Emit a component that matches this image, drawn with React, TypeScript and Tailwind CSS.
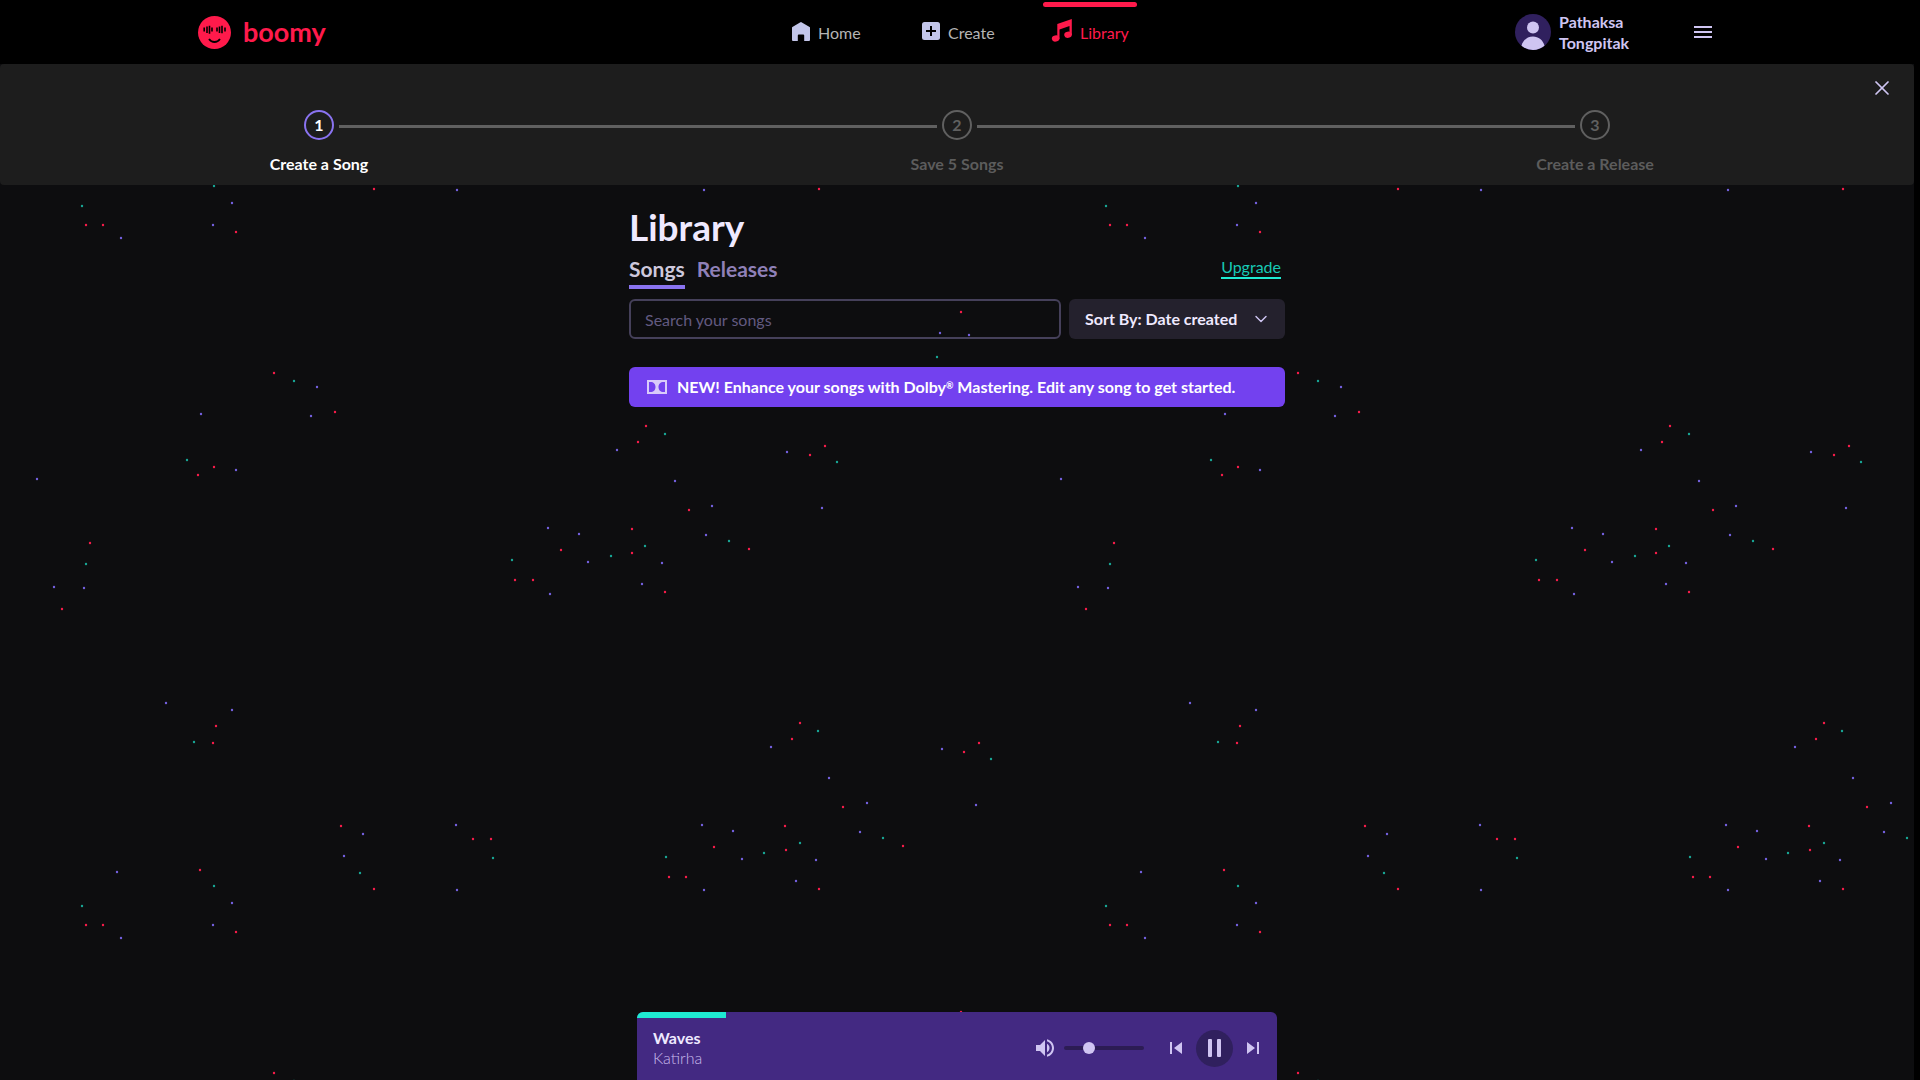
import React, { useState } from 'react';
import { ChevronDown, X } from 'lucide-react';

const PURPLE = '#7460e0';
const RED = '#f81b4a';
const TEAL = '#17a696';

// One tile of confetti, repeated over the page
const TILE_WIDTH = 1024;
const TILE_HEIGHT = 700;

const confetti: { color: string; points: number[][] }[] = [
  {
    color: PURPLE,
    points: [
      [457, 190], [232, 203], [213, 225], [121, 238], [317, 387], [311, 416], [201, 414], [236, 470],
      [37, 479], [54, 587], [84, 588], [617, 450], [787, 452], [675, 481], [822, 508], [712, 506],
      [706, 535], [548, 528], [579, 534], [588, 562], [662, 563], [642, 584], [550, 594], [166, 3],
      [232, 10], [363, 134], [344, 156], [456, 125], [117, 172], [771, 47], [942, 49], [829, 78],
      [867, 103], [976, 105], [702, 125], [733, 131], [860, 132], [742, 159], [816, 160], [704, 190],
      [796, 181], [940, 333], [969, 335]
    ]
  },
  {
    color: RED,
    points: [
      [374, 189], [86, 225], [103, 225], [236, 232], [274, 373], [335, 412], [198, 475], [214, 467],
      [90, 543], [62, 609], [646, 426], [638, 442], [825, 446], [810, 455], [689, 510], [632, 529],
      [749, 549], [632, 553], [561, 550], [515, 580], [533, 580], [665, 592], [216, 26], [213, 43],
      [341, 126], [473, 139], [491, 139], [200, 170], [800, 23], [792, 39], [964, 52], [979, 43],
      [843, 107], [785, 126], [786, 150], [714, 147], [903, 146], [669, 177], [686, 177], [819, 189],
      [961, 312]
    ]
  },
  {
    color: TEAL,
    points: [
      [214, 186], [82, 206], [294, 381], [187, 460], [86, 564], [512, 560], [665, 434], [837, 462],
      [729, 541], [645, 546], [611, 556], [194, 42], [360, 173], [493, 158], [818, 31], [991, 59],
      [800, 143], [883, 138], [764, 153], [666, 157], [937, 357]
    ]
  }
];

function ConfettiBackground() {
  return (
    <svg className="absolute inset-0 w-full h-full pointer-events-none" aria-hidden="true">
      <defs>
        <pattern id="confetti" width={TILE_WIDTH} height={TILE_HEIGHT} patternUnits="userSpaceOnUse">
          {confetti.map(({ color, points }) =>
            points.map(([x, y]) => <circle key={`${x}-${y}`} cx={x} cy={y} r="1.2" fill={color} />)
          )}
        </pattern>
      </defs>
      <rect width="100%" height="100%" fill="url(#confetti)" />
    </svg>
  );
}

function BoomyLogo() {
  return (
    <svg width="33" height="33" viewBox="0 0 33 33" aria-hidden="true">
      <circle cx="16.5" cy="16.5" r="16.5" fill="#ff1a4b" />
      <g stroke="#000" strokeWidth="1.6">
        <path d="M6.200 11.500v4M9 10.500v6.500M11.500 9.800v8M14 11.500v4" />
        <path d="M19 11.500v4M21.500 10.500v6.500M24 9.800v7.500M27 11.500v4" />
      </g>
      <path d="M11 23c2.800 4 8.200 4 11 0" fill="none" stroke="#000" strokeWidth="1.8" />
    </svg>
  );
}

function HomeIcon() {
  return (
    <svg width="20" height="24" viewBox="0 -3 20 24" fill="#c3c6ea" aria-hidden="true">
      <path d="M10 0 18.600 5Q19 5.300 19 5.800V18q0 1-1 1h-4.800v-5.500q0-1-1-1H7.800q-1 0-1 1V19H2q-1 0-1-1V5.800q0-.5.4-.8L9 .4Z" />
    </svg>
  );
}

function CreateIcon() {
  return (
    <svg width="20" height="24" viewBox="0 -2 20 24" aria-hidden="true">
      <rect x="1" y="1" width="18" height="18" rx="2.500" fill="#c3c6ea" />
      <path d="M10 5v10M5 10h10" stroke="#000" strokeWidth="2" />
    </svg>
  );
}

function LibraryIcon() {
  return (
    <svg width="22" height="24" viewBox="0 0 22 24" fill="#ff1a4b" aria-hidden="true">
      <path d="M6.300 5 20.800 0v16h-2.300V7L8.500 10.500V20H6.300Z" />
      <ellipse cx="4.600" cy="19.500" rx="3.800" ry="3.100" transform="rotate(-12 4.600 19.500)" />
      <ellipse cx="17" cy="15.800" rx="3.800" ry="3.100" transform="rotate(-12 17 15.800)" />
    </svg>
  );
}

function DolbyIcon() {
  return (
    <svg width="20" height="14" viewBox="0 0 20 14" aria-hidden="true">
      <rect width="20" height="14" fill="#d9cbfa" />
      <path d="M2 2h1.500c3 0 5 2 5 5s-2 5-5 5H2ZM18 2h-1.500c-3 0-5 2-5 5s2 5 5 5H18Z" fill="#7341ef" />
    </svg>
  );
}

function VolumeIcon() {
  return (
    <svg width="18" height="18" viewBox="0 0 18 18" fill="#d0c5f2" aria-hidden="true">
      <path d="M0 6v6h4l5 5V1L4 6Z" />
      <path d="M11 4.800v8.400c1.500-.7 2.500-2.300 2.500-4.200S12.500 5.500 11 4.800Z" />
      <path d="M11 .2v2.100c2.900.9 5 3.500 5 6.700s-2.100 5.800-5 6.700v2.100c4-.9 7-4.500 7-8.800S15 1.100 11 .2Z" />
    </svg>
  );
}

const navItems = [
  { label: 'Home', icon: <HomeIcon />, active: false },
  { label: 'Create', icon: <CreateIcon />, active: false },
  { label: 'Library', icon: <LibraryIcon />, active: true }
];

function Header() {
  return (
    <header className="bg-black">
      <div className="flex h-16 w-full max-w-[1524px] mx-auto">
        <div className="flex flex-1 items-center">
          <a href="#" className="flex items-center gap-3 text-[27px] leading-8 font-bold text-[#ff1a4b]">
            <BoomyLogo />
            boomy
          </a>
        </div>

        <nav className="flex gap-9">
          {navItems.map((item) => (
            <a
              key={item.label}
              href="#"
              className={`flex w-[94px] flex-col pt-0.5 text-base ${item.active ? 'text-[#ff1a4b]' : 'text-[#b4b4b4]'}`}
            >
              <span className={`h-[5px] rounded-full ${item.active ? 'bg-[#ff1a4b]' : 'bg-transparent'}`} />
              <span className="flex items-start gap-[7px] pl-2 pt-3">
                {item.icon}
                <span className="pt-0.5">{item.label}</span>
              </span>
            </a>
          ))}
        </nav>

        <div className="flex flex-1 items-center justify-end">
          <a href="#" className="flex items-center gap-2">
            <svg width="36" height="36" viewBox="0 0 36 36" aria-hidden="true">
              <circle cx="18" cy="18" r="18" fill="#30205e" />
              <circle cx="18" cy="13.500" r="6" fill="#cfc5f2" />
              <path d="M6.500 31.800C8 26 12.500 22.500 18 22.500S28 26 29.500 31.800A18 18 0 0 1 6.500 31.800Z" fill="#cfc5f2" />
            </svg>
            <span className="w-[76px] text-base leading-[21px] font-bold text-[#cfc5f2]">
              Pathaksa Tongpitak
            </span>
          </a>
          <button type="button" aria-label="Menu" className="ml-14 mr-[7px]">
            <svg width="24" height="24" viewBox="0 0 24 24" aria-hidden="true">
              <path d="M3 7h18M3 12h18M3 17h18" stroke="#cfc5f2" strokeWidth="2" />
            </svg>
          </button>
        </div>
      </div>
    </header>
  );
}

const steps = ['Create a Song', 'Save 5 Songs', 'Create a Release'];

function ProgressSteps() {
  return (
    <section className="relative bg-[#1d1d1d] rounded pt-[46px] pb-[9px]">
      <ol className="grid grid-cols-3">
        {steps.map((step, index) => (
          <li key={step} className="flex flex-col items-center">
            <div className="flex w-full items-center gap-[5px]">
              <span className={`mt-0.5 h-[3px] flex-1 ${index === 0 ? '' : 'bg-[#606060]'}`} />
              <span
                className={`flex size-[30px] items-center justify-center rounded-full border-2 text-base font-bold ${
                  index === 0 ? 'border-[#8a73f0] text-white' : 'border-[#606060] text-[#606060]'
                }`}
              >
                {index + 1}
              </span>
              <span className={`mt-0.5 h-[3px] flex-1 ${index === steps.length - 1 ? '' : 'bg-[#606060]'}`} />
            </div>
            <p className={`mt-3 text-base font-bold ${index === 0 ? 'text-white' : 'text-[#5c5c5c]'}`}>
              {step}
            </p>
          </li>
        ))}
      </ol>
      <button type="button" aria-label="Close" className="absolute top-3 right-5 text-[#cfc5f2]">
        <X className="size-6" strokeWidth={1.7} />
      </button>
    </section>
  );
}

function Library() {
  const [search, setSearch] = useState('');
  const [sort, setSort] = useState('created');

  return (
    <main className="relative flex-1 w-full max-w-[656px] mx-auto pt-5">
      <h1 className="text-[37px] leading-[44px] font-bold text-[#efe9ff]">Library</h1>

      <div className="flex items-start justify-between pt-2 pr-1">
        <div className="flex gap-3 text-[21px] leading-6 font-bold">
          <a href="#" className="border-b-4 border-[#8a73f0] pb-1 text-[#cdc8dc]">Songs</a>
          <a href="#" className="text-[#8f80b8]">Releases</a>
        </div>
        <a href="#" className="border-b-2 border-[#1fead2] text-base leading-5 text-[#17c9b5]">Upgrade</a>
      </div>

      <div className="flex gap-2 pt-2.5">
        <input
          type="text"
          value={search}
          onChange={(e) => setSearch(e.target.value)}
          aria-label="Search your songs"
          placeholder="Search your songs"
          className="h-10 min-w-0 flex-1 rounded-md border-2 border-[#45405a] bg-transparent px-3.5 text-base text-[#efe9ff] outline-none placeholder:text-[#625a80]"
        />
        <div className="relative w-[216px]">
          <select
            value={sort}
            onChange={(e) => setSort(e.target.value)}
            aria-label="Sort songs"
            className="h-10 w-full appearance-none rounded-md bg-[#24212d] pl-4 pr-10 text-base font-bold text-[#efe9ff]"
          >
            <option value="created">Sort By: Date created</option>
            <option value="title">Sort By: Title</option>
          </select>
          <ChevronDown
            className="absolute right-3.5 top-2.5 size-5 text-[#cfc5f2] pointer-events-none"
            strokeWidth={1.7}
          />
        </div>
      </div>

      <div className="mt-7 flex h-10 items-center gap-2.5 rounded-md bg-[#7341ef] px-[18px] text-base font-bold text-white">
        <DolbyIcon />
        <p>
          NEW! Enhance your songs with Dolby<sup className="text-[9px]">®</sup> Mastering. Edit any song to get started.
        </p>
      </div>
    </main>
  );
}

function Player() {
  const [volume, setVolume] = useState(28);

  return (
    <footer className="sticky bottom-0 w-full max-w-[640px] mx-auto overflow-hidden rounded-t-md bg-[#432982]">
      <div className="h-1.5">
        <div className="h-full w-[89px] bg-[#1fead2]" />
      </div>
      <div className="flex h-[62px] items-center pl-4 pr-[18px] pb-0.5">
        <div className="flex-1 text-base leading-5">
          <p className="font-bold text-[#efe9ff]">Waves</p>
          <p className="font-light text-[#c9bbec]">Katirha</p>
        </div>
        <button type="button" aria-label="Mute">
          <VolumeIcon />
        </button>
        <input
          type="range"
          min="0"
          max="100"
          value={volume}
          onChange={(e) => setVolume(Number(e.target.value))}
          aria-label="Volume"
          className="ml-2.5 h-1 w-20 appearance-none rounded-full bg-[#2c1c54] [&::-webkit-slider-thumb]:size-3 [&::-webkit-slider-thumb]:appearance-none [&::-webkit-slider-thumb]:rounded-full [&::-webkit-slider-thumb]:bg-[#d0c5f2]"
        />
        <div className="ml-[26px] flex items-center gap-3.5">
          <button type="button" aria-label="Previous">
            <svg width="12" height="12" viewBox="0 0 12 12" fill="#d0c5f2" aria-hidden="true">
              <path d="M0 0h2v12H0ZM12 0v12L4 6Z" />
            </svg>
          </button>
          <button type="button" aria-label="Pause" className="flex size-[37px] items-center justify-center rounded-full bg-[#30205e]">
            <svg width="13" height="18" viewBox="0 0 13 18" fill="#d0c5f2" aria-hidden="true">
              <rect width="4" height="18" rx="1" />
              <rect x="9" width="4" height="18" rx="1" />
            </svg>
          </button>
          <button type="button" aria-label="Next">
            <svg width="12" height="12" viewBox="0 0 12 12" fill="#d0c5f2" aria-hidden="true">
              <path d="M10 0h2v12h-2ZM0 0v12l8-6Z" />
            </svg>
          </button>
        </div>
      </div>
    </footer>
  );
}

export default function App() {
  return (
    <div className="min-h-screen flex flex-col bg-black font-['Lato',sans-serif]">
      {/* Header stays above the confetti */}
      <div className="relative z-10">
        <Header />
      </div>
      <div className="flex-1 flex flex-col pr-1.5 bg-black">
        <div className="flex-1 flex flex-col bg-[#0d0d0f]">
          <div className="absolute inset-y-0 left-0 right-1.5">
            <ConfettiBackground />
          </div>
          <ProgressSteps />
          <Library />
          <Player />
        </div>
      </div>
    </div>
  );
}
